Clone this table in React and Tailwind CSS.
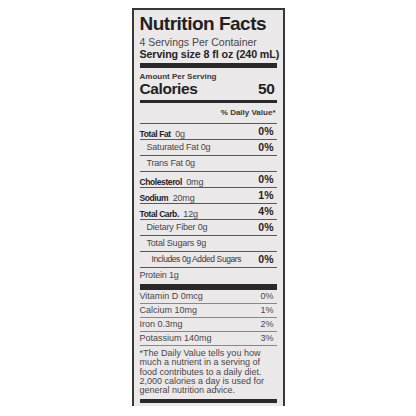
import React from "react";

const font = { fontFamily: '"Liberation Sans", Arial, sans-serif' };

const rows = [
  { label: "Total Fat", amount: "0g", pct: "0%", bold: true },
  { label: "Saturated Fat 0g", pct: "0%", indent: 1 },
  { label: "Trans Fat 0g", indent: 1 },
  { label: "Cholesterol", amount: "0mg", pct: "0%", bold: true },
  { label: "Sodium", amount: "20mg", pct: "1%", bold: true },
  { label: "Total Carb.", amount: "12g", pct: "4%", bold: true },
  { label: "Dietary Fiber 0g", pct: "0%", indent: 1 },
  { label: "Total Sugars 9g", indent: 1 },
  { label: "Includes 0g Added Sugars", pct: "0%", indent: 2 },
  { label: "Protein 1g", last: true },
];

const vitamins = [
  ["Vitamin D 0mcg", "0%"],
  ["Calcium 10mg", "1%"],
  ["Iron 0.3mg", "2%"],
  ["Potassium 140mg", "3%"],
];

const NutrientRow = ({ row }) => (
  <div
    className={`h-[16px] flex items-center justify-between ${
      row.last ? "" : "border-b border-[#5a5658]"
    }`}
  >
    {row.bold ? (
      <span className="whitespace-nowrap text-[#4a4648]">
        <span className="text-[8.5px] font-bold tracking-[-0.4px] text-[#262324]">
          {row.label}
        </span>{" "}
        <span className="text-[9px] tracking-[-0.2px]">{row.amount}</span>
      </span>
    ) : row.indent === 2 ? (
      <span className="pl-[12px] text-[8.5px] tracking-[-0.4px] text-[#3a3637] whitespace-nowrap">
        {row.label}
      </span>
    ) : (
      <span
        className={`text-[9px] tracking-[-0.2px] text-[#4a4648] whitespace-nowrap ${
          row.indent ? "pl-[7px]" : ""
        }`}
      >
        {row.label}
      </span>
    )}
    {row.pct && (
      <span className="pr-[3px] text-[10.5px] font-bold text-[#262324]">
        {row.pct}
      </span>
    )}
  </div>
);

export default function App() {
  return (
    <div className="w-[416px] h-[416px] bg-white overflow-hidden" style={font}>
      <div className="mx-auto mt-[8px] w-[153px] h-[398px] border-t-2 border-x-2 border-[#3a3637] bg-[#ebe8ea] px-[6px] flex flex-col">
        <div className="pt-[2px] h-[26px] leading-[24px] text-[19px] font-bold tracking-[-0.5px] text-[#221f20] whitespace-nowrap">
          Nutrition Facts
        </div>
        <div className="h-[12px] leading-[12px] text-[10.5px] text-[#4a4648] whitespace-nowrap">
          4 Servings Per Container
        </div>
        <div className="h-[12px] leading-[12px] text-[10.7px] font-bold tracking-[-0.1px] text-[#262324] whitespace-nowrap">
          Serving size 8 fl oz (240 mL)
        </div>
        <div className="mt-[3px] h-[5px] bg-[#2b2829]" />
        <div className="mt-[4px] h-[10px] leading-[10px] text-[8px] font-bold text-[#3a3637]">
          Amount Per Serving
        </div>
        <div className="h-[14px] leading-[14px] flex justify-between text-[15.5px] font-bold tracking-[-0.4px] text-[#221f20]">
          <span>Calories</span>
          <span className="pr-[2px]">50</span>
        </div>
        <div className="mt-[4px] h-[3px] bg-[#2b2829]" />
        <div className="h-[21px] flex items-center justify-end border-b border-[#5a5658] text-[8px] font-bold text-[#3a3637]">
          <span className="pr-[1px]">% Daily Value*</span>
        </div>
        {rows.map((r) => (
          <NutrientRow key={r.label} row={r} />
        ))}
        <div className="h-[6px] bg-[#2b2829]" />
        {vitamins.map(([label, pct]) => (
          <div
            key={label}
            className="h-[14px] flex items-center justify-between border-b border-[#8a8688] text-[9px] text-[#4a4648]"
          >
            <span>{label}</span>
            <span className="pr-[3px]">{pct}</span>
          </div>
        ))}
        <p className="pt-[3px] text-[9px] leading-[9.3px] text-[#4a4648]">
          *The Daily Value tells you how much a nutrient in a serving of food
          contributes to a daily diet. 2,000 calories a day is used for general
          nutrition advice.
        </p>
        <div className="mt-[4px] h-[4px] bg-[#2b2829]" />
      </div>
    </div>
  );
}
